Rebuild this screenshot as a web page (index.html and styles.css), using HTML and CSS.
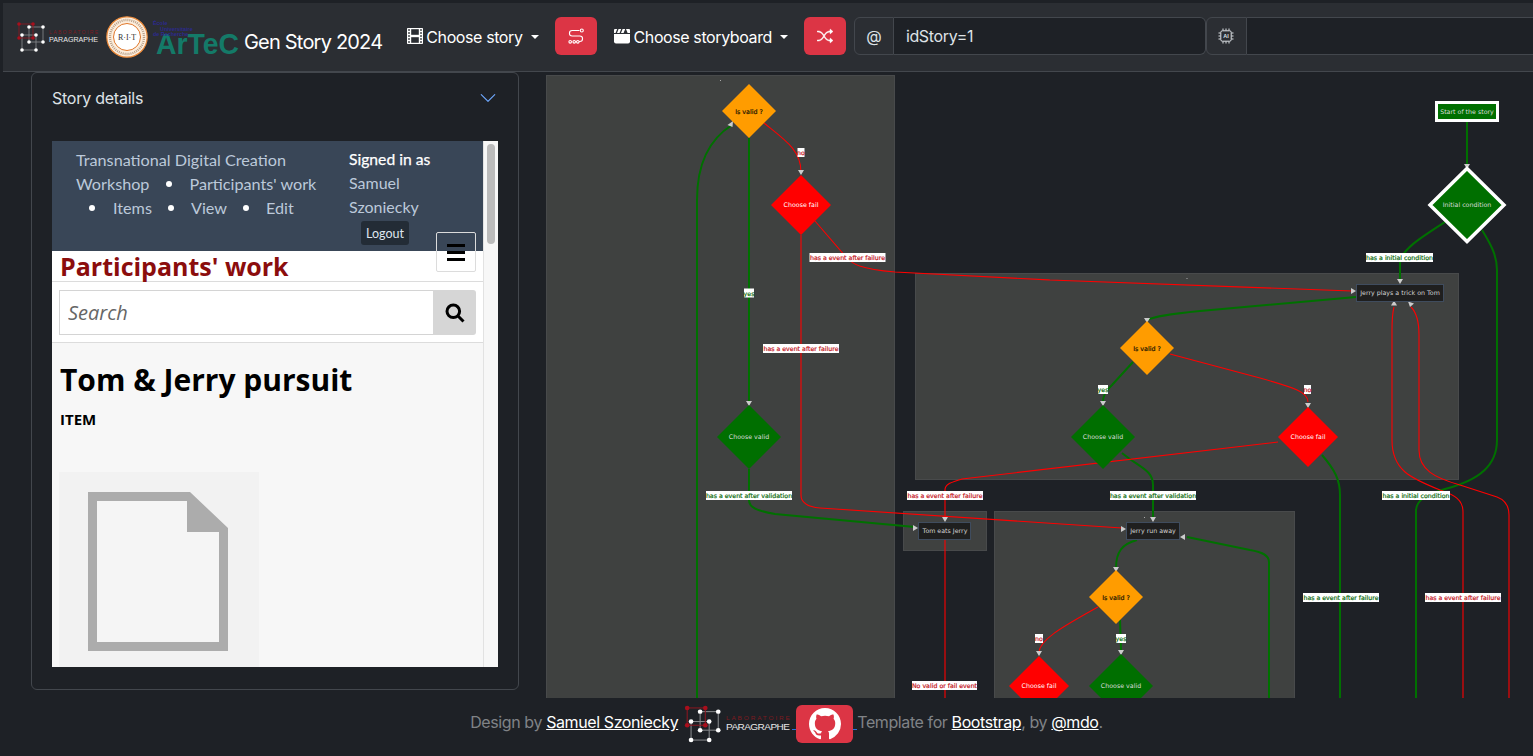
FILE: index.html
```html
<!DOCTYPE html>
<html lang="en">
<head>
<meta charset="utf-8">
<title>Gen Story 2024</title>
<link rel="stylesheet" href="styles.css">
</head>
<body>
<svg class="defs" width="0" height="0" aria-hidden="true">
  <defs>
  <g id="paragraphe">
    <g class="pl-grey">
      <rect x="22" y="35" width="14" height="15"/>
      <rect x="29" y="27" width="14" height="15"/>
    </g>
    <rect class="pl-red" x="19" y="24" width="14" height="14"/>
    <g class="pl-dot-red">
      <circle cx="19" cy="24" r="1.8"/><circle cx="33" cy="24" r="1.8"/>
      <circle cx="19" cy="38" r="1.8"/><circle cx="33" cy="38" r="1.8"/>
    </g>
    <g class="pl-dot">
      <circle cx="29" cy="27" r="1.8"/><circle cx="43" cy="27" r="1.8"/>
      <circle cx="22" cy="35" r="1.8"/><circle cx="36" cy="35" r="1.8"/>
      <circle cx="29" cy="42" r="1.8"/><circle cx="43" cy="42" r="1.8"/>
      <circle cx="22" cy="50" r="1.8"/><circle cx="36" cy="50" r="1.8"/>
    </g>
    <text class="pl-lab" x="49" y="34" textLength="49" lengthAdjust="spacing">LABORATOIRE</text>
    <text class="pl-par" x="49" y="41.5" textLength="49" lengthAdjust="spacingAndGlyphs">PARAGRAPHE</text>
  </g>
  </defs>
</svg>

<header class="navbar">
  <div class="brand">
    <svg class="logo-par" viewBox="15 20 85 34"><use href="#paragraphe"/></svg>
    <svg class="logo-rit" viewBox="0 0 42 42">
      <circle class="rit-out" cx="21" cy="21" r="20.2"/>
      <circle class="rit-band" cx="21" cy="21" r="17"/>
      <circle class="rit-in" cx="21" cy="21" r="13.5"/>
      <text class="rit-txt" x="21" y="24">R·I·T</text>
    </svg>
    <svg class="logo-artec" viewBox="152 18 88 38">
      <text class="ar-big" x="156" y="54" textLength="83" lengthAdjust="spacingAndGlyphs">ArTeC</text>
      <text class="ar-small" x="153" y="24.5">École</text>
      <text class="ar-small" x="160" y="30.500">Universitaire</text>
      <text class="ar-small" x="153" y="35.500">de Recherche</text>
    </svg>
    <span class="brand-title">Gen Story 2024</span>
  </div>

  <a class="nav-link nav-story">
    <svg class="ico ico-film" viewBox="0 0 16 16"><path d="M0 1a1 1 0 0 1 1-1h14a1 1 0 0 1 1 1v14a1 1 0 0 1-1 1H1a1 1 0 0 1-1-1V1zm4 0v6h8V1H4zm8 8H4v6h8V9zM1 1v2h2V1H1zm2 3H1v2h2V4zM1 7v2h2V7H1zm2 3H1v2h2v-2zm-2 3v2h2v-2H1zM15 1h-2v2h2V1zm-2 3v2h2V4h-2zm2 3h-2v2h2V7zm-2 3v2h2v-2h-2zm2 3h-2v2h2v-2z"/></svg>
    <span>Choose story</span><i class="caret"></i>
  </a>
  <button class="btn-red" type="button" aria-label="Route">
    <svg class="ico-route" viewBox="0 0 16 16">
      <path d="M11.500 2.500H4.200a2.500 2.500 0 0 0 0 5.500h7.600a2.600 2.600 0 0 1 0 5.500H11"/>
      <circle cx="13.800" cy="2.500" r="1.500"/>
      <circle cx="9.800" cy="13.800" r="1.300"/><circle cx="6.200" cy="13.800" r="1.300"/><circle cx="2.200" cy="13.800" r="1.300"/>
    </svg>
  </button>
  <a class="nav-link nav-board">
    <svg class="ico" viewBox="0 0 16 16">
      <path d="M0 6h16v7.500a2 2 0 0 1-2 2H2a2 2 0 0 1-2-2z"/>
      <path d="M1 1h2.200L1.600 4.900H0V2a1 1 0 0 1 1-1zm3.600 0h2.600L5.600 4.900H3zm4 0h2.600L9.600 4.900H7zm4 0H15a1 1 0 0 1 1 1v2.900h-2.400l-1.600-3.900z"/>
    </svg>
    <span>Choose storyboard</span><i class="caret"></i>
  </a>
  <button class="btn-red btn-shuffle" type="button" aria-label="Shuffle">
    <svg class="ico-shuffle" viewBox="0 0 16 16">
      <path d="M0 3.500A.5.500 0 0 1 .5 3H1c2.202 0 3.827 1.240 4.874 2.418.49.552.865 1.102 1.126 1.532.26-.43.636-.98 1.126-1.532C9.173 4.240 10.798 3 13 3v1c-1.798 0-3.173 1.010-4.126 2.082A9.624 9.624 0 0 0 7.556 8a9.624 9.624 0 0 0 1.317 1.918C9.828 10.990 11.204 12 13 12v1c-2.202 0-3.827-1.240-4.874-2.418A10.595 10.595 0 0 1 7 9.050c-.26.43-.636.98-1.126 1.532C4.827 11.760 3.202 13 1 13H.5a.5.500 0 0 1 0-1H1c1.798 0 3.173-1.010 4.126-2.082A9.624 9.624 0 0 0 6.444 8a9.624 9.624 0 0 0-1.317-1.918C4.172 5.010 2.796 4 1 4H.5a.5.500 0 0 1-.5-.5z"/>
      <path d="M13 5.466V1.534a.25.25 0 0 1 .41-.192l2.360 1.966c.12.1.12.284 0 .384l-2.360 1.966a.25.25 0 0 1-.41-.192zm0 9v-3.932a.25.25 0 0 1 .41-.192l2.360 1.966c.12.1.12.284 0 .384l-2.360 1.966a.25.25 0 0 1-.41-.192z"/>
    </svg>
  </button>
  <div class="input-group ig-params">
    <span class="ig-text ig-at">@</span>
    <input class="ig-input" type="text" value="idStory=1">
  </div>
  <div class="input-group ig-ai">
    <span class="ig-text ig-chip">
      <svg class="ico-chip" viewBox="0 0 16 16">
        <rect x="2.800" y="2.800" width="10.400" height="10.400" rx="1.500"/>
        <path d="M5 .5v2M8 .5v2M11 .5v2M5 13.500v2M8 13.500v2M11 13.500v2M.5 5h2M.5 8h2M.5 11h2M13.500 5h2M13.500 8h2M13.500 11h2"/>
        <text x="8" y="10.200">AI</text>
      </svg>
    </span>
    <input class="ig-input" type="text" value="">
  </div>
</header>

<main class="content">
  <aside class="panel">
    <div class="panel-head">
      <span>Story details</span>
      <svg class="chev" viewBox="0 0 16 16"><path d="M1.646 4.646a.5.5 0 0 1 .708 0L8 10.293l5.646-5.647a.5.5 0 0 1 .708.708l-6 6a.5.5 0 0 1-.708 0l-6-6a.5.5 0 0 1 0-.708z"/></svg>
    </div>
    <div class="frame">
      <div class="site">
        <div class="site-head">
          <nav class="crumbs">
            <div class="crumb-line">Transnational Digital Creation</div>
            <div class="crumb-line"><span>Workshop</span><i class="dot"></i><span>Participants' work</span></div>
            <div class="crumb-line crumb-last"><i class="dot"></i><span>Items</span><i class="dot"></i><span>View</span><i class="dot"></i><span>Edit</span></div>
          </nav>
          <div class="user">
            <div class="user-line user-strong">Signed in as</div>
            <div class="user-line">Samuel</div>
            <div class="user-line">Szoniecky</div>
            <button class="logout" type="button">Logout</button>
          </div>
        </div>
        <div class="site-title">Participants' work</div>
        <div class="search-row">
          <input class="search-input" type="text" placeholder="Search">
          <button class="search-btn" type="button" aria-label="Search">
            <svg viewBox="0 0 20 20"><circle cx="8.300" cy="8.300" r="6.300"/><path d="M13 13l5.500 5.500"/></svg>
          </button>
        </div>
        <div class="item">
          <h1 class="item-title">Tom &amp; Jerry pursuit</h1>
          <div class="item-type">ITEM</div>
          <div class="thumb">
            <svg class="doc" viewBox="0 0 140 159">
              <path class="doc-page" d="M9 9H99V40H131V150H9Z"/>
              <path fill-rule="evenodd" d="M0 0H102L140 36V159H0ZM9 9V150H131V40H99V9Z"/>
            </svg>
          </div>
        </div>
        <button class="burger" type="button" aria-label="Menu"><span></span><span></span><span></span></button>
      </div>
      <div class="inner-scroll"><div class="inner-thumb"></div></div>
    </div>
  </aside>

  <section class="graph">
    <svg class="graph-svg" viewBox="546 75 987 623" width="987" height="623">
      <rect class="cluster" x="546.500" y="75.500" width="348" height="640"/>
      <rect class="cluster" x="915.500" y="273.500" width="543" height="206"/>
      <rect class="cluster" x="903.500" y="511.500" width="83" height="39"/>
      <rect class="cluster" x="994.500" y="511.500" width="300" height="220"/>
      <g class="tick"><rect x="720" y="80" width="1" height="1"/><rect x="1186.500" y="278" width="1" height="1"/><rect x="1144" y="517" width="1" height="1"/></g>

      <g class="edge green thick">
        <path d="M732 125C708 140 697 165 697 200V698"/>
        <path d="M749 138V402"/>
        <path d="M1416 698V510C1417 500 1425 495 1445 489C1480 480 1497 465 1497 440V270C1497 255 1490 243 1482 230"/>
        <path d="M1400 280V263C1401 250 1420 238 1445 222"/>
        <path d="M1467 122V165"/>
        <path d="M1356 297L1200 311C1170 314 1155 316 1147 320"/>
        <path d="M1153 518V485C1153 470 1140 468 1122 453"/>
        <path d="M1322 455C1335 470 1340 480 1340 495V698"/>
        <path d="M1137 540C1122 544 1116 552 1116 568"/>
        <path d="M1269 698V562C1269 555 1262 552 1250 550L1187 537"/>
        <path d="M749 469V500C749 508 758 511 775 514L915 527"/>
        <path d="M1133 362L1112 385C1105 392 1103 396 1103 402"/>
        <path d="M1120 620L1121 650"/>
      </g>
      <g class="edge red">
        <path d="M764 123C785 140 801 150 801 172"/>
        <path d="M815 221L846 257C852 264 860 269 895 272C950 275 1000 277 1050 280L1352 291"/>
        <path d="M801 235V495C801 503 808 507 820 508L1122 528"/>
        <path d="M945 518V490C945 484 950 483 962 479L1278 442"/>
        <path d="M945 540V698"/>
        <path d="M1170 354L1260 378C1295 388 1308 392 1308 402"/>
        <path d="M1098 607C1060 628 1040 640 1039 652"/>
        <path d="M1394 307C1392 315 1392 320 1392 330V440C1392 470 1410 478 1440 490C1455 495 1463 500 1463 512V698"/>
        <path d="M1411 307C1416 312 1419 320 1419 335V450C1419 470 1435 478 1460 485L1497 497C1505 500 1509 505 1509 515V698"/>
      </g>

      <g class="arrows">
        <path d="M733 121l-.5 6-5-2z"/>
        <path d="M798 170h6l-3 5z"/>
        <path d="M746 401h6l-3 5z"/>
        <path d="M1464 164h6l-3 5z"/>
        <path d="M1397 279h6l-3 5z"/>
        <path d="M1351 288v6l5-3z"/>
        <path d="M1144 318h6l-3 5z"/>
        <path d="M1100 401h6l-3 5z"/>
        <path d="M1305 403h6l-3 5z"/>
        <path d="M1391 305.500h6l-3-5z"/>
        <path d="M1408 301.500l6 2-4 3.500z"/>
        <path d="M942 517h6l-3 5z"/>
        <path d="M1150 517h6l-3 5z"/>
        <path d="M913 525v6l5-3z"/>
        <path d="M1121 526v6l5-3z"/>
        <path d="M1185 534v6l-5-3z"/>
        <path d="M1113 567h6l-3 5z"/>
        <path d="M1036 651h6l-3 5z"/>
        <path d="M1118 650h6l-3 5z"/>
      </g>

      <polygon class="n-orange" points="749,84 776,111 749,138 722,111"/>
      <text class="nt nt-dark" x="749" y="111">Is valid ?</text>
      <polygon class="n-red" points="801,175 831,205 801,235 771,205"/>
      <text class="nt nt-white" x="801" y="204.500">Choose fail</text>
      <polygon class="n-green" points="749,405 781,437 749,469 717,437"/>
      <text class="nt" x="749" y="436.500">Choose valid</text>

      <rect class="n-start" x="1436.500" y="102.500" width="61" height="18"/>
      <text class="nt" x="1467" y="111">Start of the story</text>
      <polygon class="n-init" points="1467,168.500 1504,205 1467,241.500 1430,205"/>
      <text class="nt" x="1467" y="204.500">Initial condition</text>

      <rect class="n-box" x="1356.500" y="284.500" width="87" height="17"/>
      <text class="nt nt-box" x="1400" y="292.500">Jerry plays a trick on Tom</text>

      <polygon class="n-orange" points="1147,321 1174,348 1147,375 1120,348"/>
      <text class="nt nt-dark" x="1147" y="348">Is valid ?</text>
      <polygon class="n-green" points="1103,405 1135,437 1103,469 1071,437"/>
      <text class="nt" x="1103" y="436.500">Choose valid</text>
      <polygon class="n-red" points="1308,407 1338,437 1308,467 1278,437"/>
      <text class="nt nt-white" x="1308" y="436.500">Choose fail</text>

      <rect class="n-box" x="918.500" y="522.500" width="52" height="17"/>
      <text class="nt nt-box" x="945" y="530.500">Tom eats Jerry</text>
      <rect class="n-box" x="1126.500" y="522.500" width="53" height="17"/>
      <text class="nt nt-box" x="1153" y="530.500">Jerry run away</text>

      <polygon class="n-orange" points="1116,570 1143,597 1116,624 1089,597"/>
      <text class="nt nt-dark" x="1116" y="597">Is valid ?</text>
      <polygon class="n-red" points="1039,656 1069,686 1039,716 1009,686"/>
      <text class="nt nt-white" x="1039" y="685.500">Choose fail</text>
      <polygon class="n-green" points="1121,654 1153,686 1121,718 1089,686"/>
      <text class="nt" x="1121" y="685.500">Choose valid</text>

      <g class="lbl lbl-red"><rect x="797.500" y="148" width="7" height="9"/><text x="801" y="152.500">no</text></g>
      <g class="lbl lbl-green"><rect x="744" y="288.500" width="10" height="9"/><text x="749" y="293">yes</text></g>
      <g class="lbl lbl-red"><rect x="809.500" y="253" width="76" height="9"/><text x="847.500" y="257.500">has a event after failure</text></g>
      <g class="lbl lbl-red"><rect x="763" y="344" width="76" height="9"/><text x="801" y="348.500">has a event after failure</text></g>
      <g class="lbl lbl-green"><rect x="1366" y="253" width="67" height="9"/><text x="1399.500" y="257.500">has a initial condition</text></g>
      <g class="lbl lbl-green"><rect x="1098" y="385" width="10" height="9"/><text x="1103" y="389.500">yes</text></g>
      <g class="lbl lbl-red"><rect x="1304" y="385" width="7" height="9"/><text x="1307.500" y="389.500">no</text></g>
      <g class="lbl lbl-green"><rect x="706" y="491" width="86" height="9"/><text x="749" y="495.500">has a event after validation</text></g>
      <g class="lbl lbl-red"><rect x="907" y="491" width="76" height="9"/><text x="945" y="495.500">has a event after failure</text></g>
      <g class="lbl lbl-green"><rect x="1110" y="491" width="86" height="9"/><text x="1153" y="495.500">has a event after validation</text></g>
      <g class="lbl lbl-green"><rect x="1382" y="491" width="68" height="9"/><text x="1416" y="495.500">has a initial condition</text></g>
      <g class="lbl lbl-green"><rect x="1303" y="593" width="76" height="9"/><text x="1341" y="597.500">has a event after failure</text></g>
      <g class="lbl lbl-red"><rect x="1425" y="593" width="76" height="9"/><text x="1463" y="597.500">has a event after failure</text></g>
      <g class="lbl lbl-red"><rect x="1035" y="634" width="8" height="9"/><text x="1039" y="638.500">no</text></g>
      <g class="lbl lbl-green"><rect x="1116" y="634" width="10" height="9"/><text x="1121" y="638.500">yes</text></g>
      <g class="lbl lbl-red"><rect x="912" y="681" width="65" height="9"/><text x="944.500" y="685.500">No valid or fail event</text></g>
    </svg>
  </section>
</main>

<footer class="footer">
  <span class="foot-text">Design by <a class="foot-link">Samuel Szoniecky</a></span>
  <svg class="foot-logo" viewBox="15 20 85 34" preserveAspectRatio="none"><use href="#paragraphe"/></svg>
  <span class="foot-under"></span>
  <a class="foot-git" aria-label="GitHub">
    <svg viewBox="0 0 16 16"><path d="M8 0C3.580 0 0 3.580 0 8c0 3.540 2.290 6.530 5.470 7.590.4.07.55-.17.55-.38 0-.19-.01-.82-.01-1.490-2.010.37-2.530-.49-2.690-.94-.09-.23-.48-.94-.82-1.130-.28-.15-.68-.52-.01-.53.63-.01 1.080.58 1.230.82.72 1.210 1.870.87 2.330.66.07-.52.28-.87.51-1.070-1.780-.2-3.640-.89-3.640-3.950 0-.87.31-1.590.82-2.150-.08-.2-.36-1.020.08-2.120 0 0 .67-.21 2.200.82.64-.18 1.320-.27 2-.27.68 0 1.360.09 2 .27 1.530-1.040 2.200-.82 2.200-.82.44 1.100.16 1.920.08 2.120.51.56.82 1.270.82 2.150 0 3.070-1.870 3.750-3.650 3.950.29.25.54.73.54 1.480 0 1.070-.01 1.930-.01 2.200 0 .21.15.46.55.38A8.012 8.012 0 0 0 16 8c0-4.420-3.580-8-8-8z"/></svg>
  </a>
  <span class="foot-under foot-under-2"></span>
  <span class="foot-text">Template for <a class="foot-link">Bootstrap</a>, by <a class="foot-link">@mdo</a>.</span>
</footer>
</body>
</html>
```

FILE: styles.css
```css
* { box-sizing: border-box; }
html, body { margin: 0; height: 756px; overflow: hidden; }
body {
  background: #1e2126;
  color: #dee2e6;
  font-family: Inter, "Liberation Sans", sans-serif;
  font-size: 16px;
  padding-top: 3px;
}
.defs { position: absolute; }

/* logo */
.pl-grey rect { fill: none; stroke: #8b8d90; stroke-width: .8; }
.pl-red { fill: none; stroke: #8f1720; stroke-width: .8; }
.pl-dot-red circle { fill: #a80f1c; }
.pl-dot circle { fill: #fff; }
.pl-lab { font: 5px "Liberation Sans", sans-serif; fill: #7d1a20; }
.pl-par { font: 7.500px "Liberation Sans", sans-serif; fill: #e8e8e8; }

/* navbar */
.navbar {
  margin-left: 3px;
  height: 69px;
  background: #2b2e33;
  border-bottom: 1px solid #43474d;
  display: flex;
  align-items: center;
  padding-bottom: 3px;
  overflow: hidden;
}
.brand { display: flex; align-items: center; padding-left: 12px; flex: none; }
.logo-par { width: 85px; height: 34px; flex: none; margin-top: 3px; overflow: visible; }
.logo-rit { width: 42px; height: 42px; flex: none; margin-left: 6px; margin-top: 3px; }
.logo-artec { width: 88px; height: 38px; flex: none; margin-left: 4px; margin-top: 3px; overflow: visible; }
.brand-title { font-size: 20px; color: #fff; margin-left: 4px; margin-top: 13px; white-space: nowrap; letter-spacing: -.8px; }
.rit-out { fill: #fdeedd; stroke: #ec8a3a; stroke-width: 1.200; }
.rit-band { fill: none; stroke: #8a6a52; stroke-width: 2.400; stroke-dasharray: 1 1; opacity: .6; }
.rit-in { fill: #fff; stroke: #e0772a; stroke-width: 1; }
.rit-txt { font: 8px "Liberation Serif", serif; fill: #333; text-anchor: middle; }
.ar-big { font: bold 30px "Liberation Sans", sans-serif; fill: #147a68; }
.ar-small { font: bold 5.400px "Liberation Sans", sans-serif; fill: #2b2a8e; }

.nav-link { display: flex; align-items: center; color: #fff; white-space: nowrap; flex: none; letter-spacing: -.4px; margin-top: 2px; }
.nav-story { margin-left: 25px; }
.nav-board { margin-left: 17px; }
.ico { width: 16px; height: 16px; fill: #fff; margin-right: 4px; flex: none; margin-top: -2px; }
.ico-film { stroke: #fff; stroke-width: .4; margin-right: 3px; }
.caret {
  margin-left: 8px; width: 0; height: 0;
  border-top: 4.800px solid #fff;
  border-left: 4.800px solid transparent;
  border-right: 4.800px solid transparent;
}
.btn-red {
  width: 42px; height: 38px; margin-left: 16px; flex: none;
  background: #dc3545; border: 0; border-radius: 6px; padding: 0;
  display: flex; align-items: center; justify-content: center;
}
.ico-route { width: 16px; height: 16px; fill: none; stroke: #fff; stroke-width: 1.100; }
.ico-shuffle { width: 16px; height: 16px; fill: #fff; stroke: #fff; stroke-width: .5; }
.input-group { display: flex; height: 38px; flex: none; }
.ig-params { margin-left: 8px; width: 352px; }
.ig-ai { width: 340px; }
.ig-text {
  display: flex; align-items: center; justify-content: center;
  background: #2b2e33; border: 1px solid #43474d;
  border-radius: 6px 0 0 6px; color: #dee2e6; flex: none;
}
.ig-at { width: 40px; }
.ig-chip { width: 41px; }
.ig-input {
  flex: 1; min-width: 0; height: 38px;
  background: #1e2126; border: 1px solid #43474d; border-left: 0;
  border-radius: 0 6px 6px 0; color: #dee2e6;
  font: 16px Inter, "Liberation Sans", sans-serif; letter-spacing: -.35px; padding: 0 12px; outline: none;
}
.ico-chip { width: 16px; height: 16px; fill: none; stroke: #dee2e6; stroke-width: 1; }
.ico-chip text { font: bold 5.500px "Liberation Sans", sans-serif; fill: #dee2e6; stroke: none; text-anchor: middle; }

/* content */
.content { display: flex; align-items: flex-start; padding-left: 31px; height: 626px; }
.panel {
  width: 488px; height: 618px; flex: none;
  border: 1px solid #43474d; border-radius: 6px;
  padding: 0 20px;
}
.panel-head {
  height: 49px; display: flex; align-items: center; justify-content: space-between;
  color: #dee2e6; padding-right: 1px; letter-spacing: -.25px;
}
.chev { width: 18px; height: 18px; fill: #6ea8fe; margin-top: 1px; }
.frame { margin-top: 19px; width: 446px; height: 526px; display: flex; background: #f7f7f7; overflow: hidden; }
.site { position: relative; width: 432px; flex: none; font-family: "Open Sans", sans-serif; color: #000; border-right: 1px solid #e2e2e2; }
.site-head { height: 110px; background: #394657; display: flex; padding-top: 6px; font-family: Lato, sans-serif; }
.crumbs { width: 297px; padding-left: 24px; flex: none; color: #bcc9da; font-size: 16.200px; }
.crumb-line { display: flex; align-items: center; height: 24px; white-space: nowrap; }
.crumb-last { padding-left: 13px; }
.dot { width: 6px; height: 6px; border-radius: 50%; background: #fff; margin: 1px 17px 0; flex: none; }
.crumb-last .dot { margin-left: 16px; }
.crumb-last .dot:first-child { margin-left: 0; margin-right: 18px; }
.user { color: #bcc9da; }
.user-line { height: 24px; line-height: 24px; white-space: nowrap; }
.user-strong { color: #fff; font-size: 15.700px; -webkit-text-stroke: .25px #fff; }
.logout {
  display: block; margin: 2px 0 0 12px; width: 48px; height: 24px; padding: 0;
  background: #232c36; color: #dfe6ee; border: 0; border-radius: 3px;
  font: 12.500px Lato, sans-serif;
}
.site-title {
  height: 31px; background: #fff; border-bottom: 1px solid #dcdcdc;
  color: #8b0d0d; font-weight: 700; font-size: 25px; line-height: 30px;
  padding-left: 8px; white-space: nowrap;
}
.search-row { height: 61px; background: #fff; border-bottom: 1px solid #dcdcdc; display: flex; padding: 8px 7px 7px; }
.search-input {
  flex: 1; min-width: 0; height: 45px; border: 1px solid #d4d4d4; border-right: 0;
  font: italic 20px "Open Sans", sans-serif; padding: 0 8px; outline: none; background: #fff;
}
.search-input::placeholder { color: #666; opacity: 1; }
.search-btn {
  width: 43px; height: 45px; border: 0; background: #d6d6d6; border-radius: 0 3px 3px 0;
  padding: 0; display: flex; align-items: center; justify-content: center;
}
.search-btn svg { width: 20px; height: 20px; fill: none; stroke: #000; stroke-width: 3; }
.item { padding: 17px 7px 0; }
.item-title { margin: 0 0 0 1px; font-size: 30px; line-height: 40px; font-weight: 700; white-space: nowrap; }
.item-type { margin: 9px 0 0 1px; font-size: 15px; line-height: 20px; font-weight: 700; }
.thumb { margin-top: 43px; width: 200px; height: 200px; background: #f2f2f2; padding: 20px 0 0 29px; }
.doc { display: block; width: 140px; height: 159px; fill: #acacac; }
.doc-page { fill: #f5f5f5; }
.burger {
  position: absolute; left: 384px; top: 91px; width: 40px; height: 40px;
  background: transparent; border: 1px solid #dcdcdc; border-radius: 2px; padding: 0;
  display: flex; flex-direction: column; align-items: center; justify-content: center; gap: 4px;
}
.burger span { display: block; width: 18px; height: 3px; background: #000; }
.inner-scroll { flex: 1; padding: 3px 3px 0; }
.inner-thumb { width: 8px; height: 100px; background: #bbb; border-radius: 4px; }

/* graph */
.graph { margin-left: 27px; margin-top: 3px; flex: none; }
.graph-svg { display: block; }
.cluster { fill: #3f4140; stroke: #484a4b; stroke-width: 1; }
.tick rect { fill: #aaa; }
.edge path { fill: none; }
.green path { stroke: #007000; stroke-width: 2; }
.red path { stroke: #f00; stroke-width: 1.100; }
.arrows path { fill: #ccc; }
.n-orange { fill: #ff9c00; }
.n-red { fill: #f00; }
.n-green { fill: #006f00; }
.n-start { fill: #006f00; stroke: #fff; stroke-width: 3; }
.n-init { fill: #006f00; stroke: #fff; stroke-width: 3.500; }
.n-box { fill: #1f1f1f; stroke: #3f4c5e; stroke-width: 1; }
.nt {
  font: 6.300px "DejaVu Sans", sans-serif; fill: #dcdcdc;
  text-anchor: middle; dominant-baseline: central;
}
.nt-dark { fill: #1a1300; stroke: #1a1300; stroke-width: .2; }
.nt-white { fill: #fff; }
.nt-box { fill: #d4d4d4; }
.lbl rect { fill: #fff; }
.lbl text { font: 6.250px "DejaVu Sans", sans-serif; stroke-width: .2; text-anchor: middle; dominant-baseline: central; }
.lbl-red text { fill: #c4141c; stroke: #c4141c; }
.lbl-green text { fill: #0b6a0b; stroke: #0b6a0b; }

/* footer */
.footer {
  height: 58px; display: flex; align-items: center; justify-content: center;
  color: #808387; white-space: nowrap; padding-left: 40px; padding-bottom: 6px;
  letter-spacing: -.4px;
}
.foot-text { margin-bottom: 4px; }
.foot-link { color: #fff; text-decoration: underline; }
.foot-logo { width: 110px; height: 42px; flex: none; margin-left: 4px; overflow: visible; }
.foot-under { width: 4px; height: 1px; background: #2a6fdb; margin-top: 11px; flex: none; }
.foot-under-2 { width: 4px; }
.foot-git {
  width: 57px; height: 38px; background: #dc3545; border-radius: 6px; flex: none;
  display: flex; align-items: center; justify-content: center;
}
.foot-git svg { width: 32px; height: 32px; fill: #fff; }
```
